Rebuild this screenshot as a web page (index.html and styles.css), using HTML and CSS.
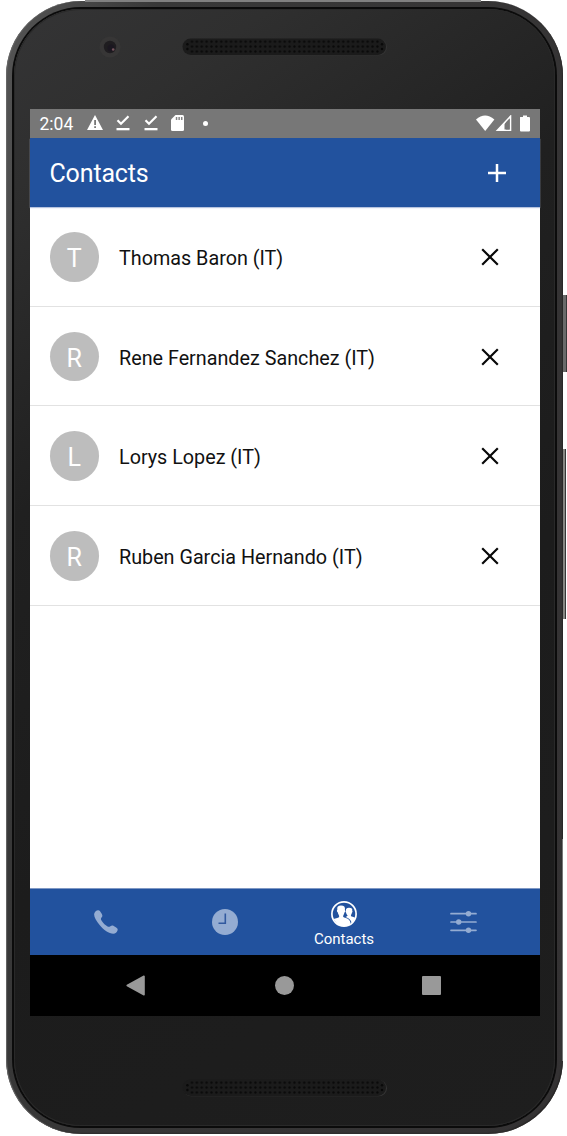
FILE: index.html
```html
<!DOCTYPE html>
<html lang="en">
<head>
<meta charset="utf-8">
<title>Contacts</title>
<link rel="stylesheet" href="styles.css">
</head>
<body>
<svg class="defs" width="0" height="0" aria-hidden="true">
  <defs>
    <pattern id="holes" x="7.6" y="1.2" width="4.88" height="4.9" patternUnits="userSpaceOnUse">
      <circle cx="2.4" cy="2.5" r="1.2" fill="#090909"/>
    </pattern>
    <symbol id="grille" viewBox="0 0 206 18">
      <rect x="1" y="1" width="204" height="16.300" rx="8.200" fill="#343434"/>
      <rect x=".5" y=".5" width="203.500" height="16.500" rx="8.200" fill="#1b1b1b"/>
      <rect x="7.600" y="1.200" width="190.300" height="14.700" fill="url(#holes)"/>
      <g fill="#090909"><circle cx="5.400" cy="6.300" r="1.200"/><circle cx="5.400" cy="11" r="1.200"/><circle cx="200" cy="6.300" r="1.200"/><circle cx="200" cy="11" r="1.200"/></g>
    </symbol>
    <symbol id="close" viewBox="0 0 18 18">
      <path d="M1.200 1.200 16.800 16.800M16.800 1.200 1.200 16.800" stroke="#080808" stroke-width="2.200" fill="none"/>
    </symbol>
    <symbol id="done" viewBox="0 0 14 16">
      <path d="M1.500 5.200 5 8.700 12.500 1.300" stroke="#fff" stroke-width="2.200" fill="none"/>
      <path d="M.5 13H13.500V15.300H.5Z" fill="#fff"/>
    </symbol>
  </defs>
</svg>
<div class="phone">
  <i class="edge edge-top"></i>
  <i class="key key-power"></i>
  <i class="key key-volume"></i>
  <i class="key key-lower"></i>
  <div class="face">
    <div class="bezel bezel-top">
      <svg class="camera" viewBox="0 0 22 22"><circle cx="11" cy="11" r="10.500" fill="#373636"/><circle cx="11" cy="11" r="6.200" fill="#1f1d20"/><circle cx="12" cy="12" r="3.500" fill="#1b1720"/><circle cx="14.200" cy="13.500" r="1.300" fill="#76545d"/></svg>
      <svg class="grille"><use href="#grille"/></svg>
    </div>
    <div class="screen">
      <div class="status">
        <span class="time">2:04</span>
        <svg class="warn" viewBox="0 0 16 15"><path d="M8 0 16 15H0Z" fill="#fff"/><path d="M7.200 5h1.800v5H7.200ZM7.200 11.300h1.800v1.800H7.200Z" fill="#777"/></svg>
        <svg class="done"><use href="#done"/></svg>
        <svg class="done second"><use href="#done"/></svg>
        <svg class="sd" viewBox="0 0 13 16"><path d="M4.500 0H11.500Q13 0 13 1.500V14.500Q13 16 11.500 16H1.500Q0 16 0 14.500V4.500Z" fill="#fff"/><path d="M4.800 2h1.500v3H4.800ZM7.400 2h1.500v3H7.400ZM10 2h1.500v3H10Z" fill="#858585"/></svg>
        <i class="dot"></i>
        <svg class="signals" viewBox="0 0 56 17"><path d="M0 4.500Q9-3.500 18.400 4.500L9.200 16Z" fill="#fff"/><path d="M34.500 1.300V15.300H21.500Z" fill="none" stroke="#fff" stroke-width="1.600"/><path d="M21.500 15.300 28.500 7.500V15.300Z" fill="#fff"/><path d="M30 7.500 33.700 3.600V14.500H30Z" fill="#777"/><path d="M44.200 2H47V.5H51V2H53Q54 2 54 3V15.500Q54 16.500 53 16.500H45Q44 16.500 44 15.500V3Q44 2 44.200 2Z" fill="#fff"/></svg>
      </div>
      <header class="header">
        <h1 class="title">Contacts</h1>
        <svg class="add" viewBox="0 0 18 18"><path d="M9 0V18M0 9H18" stroke="#fff" stroke-width="2.500"/></svg>
      </header>
      <main class="list">
        <div class="row"><span class="avatar">T</span><span class="name">Thomas Baron (IT)</span><svg class="close"><use href="#close"/></svg></div>
        <div class="row"><span class="avatar">R</span><span class="name">Rene Fernandez Sanchez (IT)</span><svg class="close"><use href="#close"/></svg></div>
        <div class="row"><span class="avatar">L</span><span class="name">Lorys Lopez (IT)</span><svg class="close"><use href="#close"/></svg></div>
        <div class="row"><span class="avatar">R</span><span class="name">Ruben Garcia Hernando (IT)</span><svg class="close"><use href="#close"/></svg></div>
      </main>
      <nav class="tabs">
        <div class="tab"><svg class="phone-icon" viewBox="0 0 24 24"><path d="M.2 3.700C.6 1.800 2.400.2 4 .2 5.500 0 6.200 1.200 7.200 2.900 8.700 5.200 8.700 6 7.500 7.600 6.500 8.900 6.900 9.500 8 11.200 9.300 13.200 11.500 15.200 13.200 16.200 14.600 17 15.200 17 16.400 16.200 18 15.100 18.800 15.300 21 16.700 23.200 18 24 18.700 23.600 20.200 23.200 22 21.300 23.700 19.300 23.800 15 23.800 9.600 19.800 5.600 15 1.900 10.600-.3 6.600.2 3.700Z" fill="#94acd2"/></svg></div>
        <div class="tab"><svg class="clock" viewBox="0 0 26 26"><circle cx="13" cy="13" r="13" fill="#94acd2"/><path d="M13.300 4.500V14.200H6.500" fill="none" stroke="#31599f" stroke-width="1.600"/></svg></div>
        <div class="tab active">
          <svg class="people" viewBox="0 0 26 26"><circle cx="13" cy="13" r="12.100" fill="none" stroke="#fff" stroke-width="1.700"/><path d="M2.500 18C5 17.300 8 17 8.200 15.500 8.300 14.500 7.200 13.600 6.700 11.300 5.900 10.800 5.600 9.200 6.300 8.700 5.800 5.800 7.200 4.600 10 4.500 13 4.500 14.500 6 13.900 8.900 14.500 9.400 14.200 11 13.500 11.400 13 13.500 12 14.400 12.100 15.500 12.200 17 18.500 16.600 19.500 21.500L18.500 24 13 25.300 7 24Z" fill="#fff"/><path d="M14.600 15.900C16.200 15.300 16.600 14.800 16.500 14.200 15.700 13.300 15.200 12.600 15 11.400 14.400 10.800 14.400 9.900 15 9.500 14.700 7.500 16 6.600 18.100 6.700 20.600 6.700 21.700 7.800 21.200 9.700 21.700 10.200 21.500 11.200 21 11.600 20.700 13 20 13.900 19.900 14.700 20.100 15.800 23 15.800 24.300 17L21 22.500C19.800 18.500 17.700 17.100 14.600 15.900Z" fill="#fff"/></svg>
          <span class="tab-label">Contacts</span>
        </div>
        <div class="tab"><svg class="sliders" viewBox="0 0 27 22"><path d="M1 2.700H26M1 11H26M1 19.300H26" stroke="#94acd2" stroke-width="1.700" stroke-linecap="round"/><g fill="#94acd2"><circle cx="18.500" cy="2.700" r="2.700"/><circle cx="8.700" cy="11" r="2.700"/><circle cx="18.500" cy="19.300" r="2.700"/></g></svg></div>
      </nav>
      <div class="system">
        <svg class="sys" viewBox="0 0 20 20"><path d="M18 .8V19.200L1.200 10Z" fill="#999" stroke="#999" stroke-width="1.600" stroke-linejoin="round"/></svg>
        <i class="home"></i>
        <i class="recents"></i>
      </div>
    </div>
    <div class="bezel bezel-bottom"><svg class="grille"><use href="#grille"/></svg></div>
  </div>
</div>
</body>
</html>
```
FILE: styles.css
```css
* { box-sizing: border-box; }
body { margin: 0; background: #fff; font-family: Roboto, "Liberation Sans", sans-serif; overflow: hidden; }
svg { display: block; flex: none; }
.defs { position: absolute; }
.phone {
  position: relative;
  width: 557px;
  height: 1133px;
  margin: 1px 0 0 6px;
  padding: 8px;
  border-radius: 75px;
  background: linear-gradient(100deg, #555 0%, #383838 20%, #343233 100%);
  box-shadow: inset 1px 0 1px #686868, inset -1px -1px 1px #292727;
}
.edge-top { position: absolute; left: 79px; top: -1px; width: 396px; height: 2px; background: #808080; }
.key { position: absolute; left: 557px; background: linear-gradient(90deg, #6a6a6a 75%, #383838 75%); }
.key-power { top: 294px; width: 4px; height: 77px; }
.key-volume { top: 448px; width: 3px; height: 170px; background: linear-gradient(90deg, #878783 67%, #383838 67%); }
.key-lower { left: 556px; top: 838px; width: 1px; height: 222px; background: #777; }
.face {
  display: flex;
  flex-direction: column;
  height: 1117px;
  padding: 0 15px 0 16px;
  border-radius: 67px;
  background: linear-gradient(145deg, #343435 0%, #2f2f2f 12%, #202020 34%, #1c1c1c 60%, #1e1e1e 100%);
  box-shadow: 0 0 0 2px #0b0b0b, inset 0 0 0 1px #292929;
}
.bezel-top { display: flex; align-items: flex-start; height: 100px; padding: 27px 0 0 69px; }
.camera { width: 22px; height: 22px; }
.bezel-top .grille { margin: 2px 0 0 61px; }
.grille { width: 206px; height: 18px; }
.bezel-bottom { padding: 63px 0 0 152px; }
.screen { display: flex; flex-direction: column; width: 510px; height: 907px; background: #fff; }
.status { display: flex; align-items: center; height: 29px; padding: 0 0 1px 9.5px; background: #777; color: #fff; }
.time { width: 47.5px; padding-top: 2px; font-size: 17.5px; line-height: 28px; }
.warn { width: 16px; height: 15px; margin-top: -1px; }
.done { width: 14px; height: 16px; margin-left: 13px; }
.done.second { margin-left: 13.5px; }
.sd { width: 13px; height: 16px; margin-left: 13.5px; }
.dot { width: 5px; height: 5px; margin-left: 18.5px; border-radius: 50%; background: #fff; }
.signals { width: 56px; height: 17px; margin: 0 8px 0 auto; }
.header { display: flex; align-items: center; justify-content: space-between; height: 69px; padding: 2px 34px 0 19.5px; background: #22529e; box-shadow: 0 1px 1px #b7c4df; color: #fff; }
.title { margin: 0; font-size: 25px; font-weight: 400; line-height: 34px; letter-spacing: -.15px; }
.add { width: 18px; height: 18px; margin-top: -2px; }
.list { height: 682px; }
.row { display: flex; align-items: center; height: 99.7px; padding: 1px 41.5px 0 19.5px; border-bottom: 1px solid #e2e2e2; }
.avatar { display: flex; align-items: center; justify-content: center; width: 49.5px; height: 49.5px; padding-top: 3px; border-radius: 50%; background: #bdbdbd; color: #fff; font-size: 25px; }
.name { margin: 4px auto 0 20px; color: #111; font-size: 19.75px; line-height: 28px; white-space: nowrap; }
.close { width: 18px; height: 18px; }
.tabs { display: grid; grid-template-columns: repeat(4, 119px); height: 66px; padding-left: 16.5px; background: #22529e; box-shadow: 0 -1px 0 #7f98c4; }
.tab { display: flex; flex-direction: column; align-items: center; justify-content: center; color: #fff; }
.tab.active { justify-content: flex-start; padding-top: 12px; }
.phone-icon { width: 24px; height: 24px; }
.clock, .people { width: 26px; height: 26px; }
.sliders { width: 27px; height: 22px; }
.tab-label { font-size: 15px; line-height: 20px; margin-top: 2px; }
.system { display: flex; align-items: center; justify-content: space-between; height: 61px; padding: 0 99px 0 96px; background: #000; }
.sys { width: 20px; height: 21px; }
.home { width: 19px; height: 19px; border-radius: 50%; background: #999; }
.recents { width: 19px; height: 19px; border-radius: 1px; background: #999; }
```
